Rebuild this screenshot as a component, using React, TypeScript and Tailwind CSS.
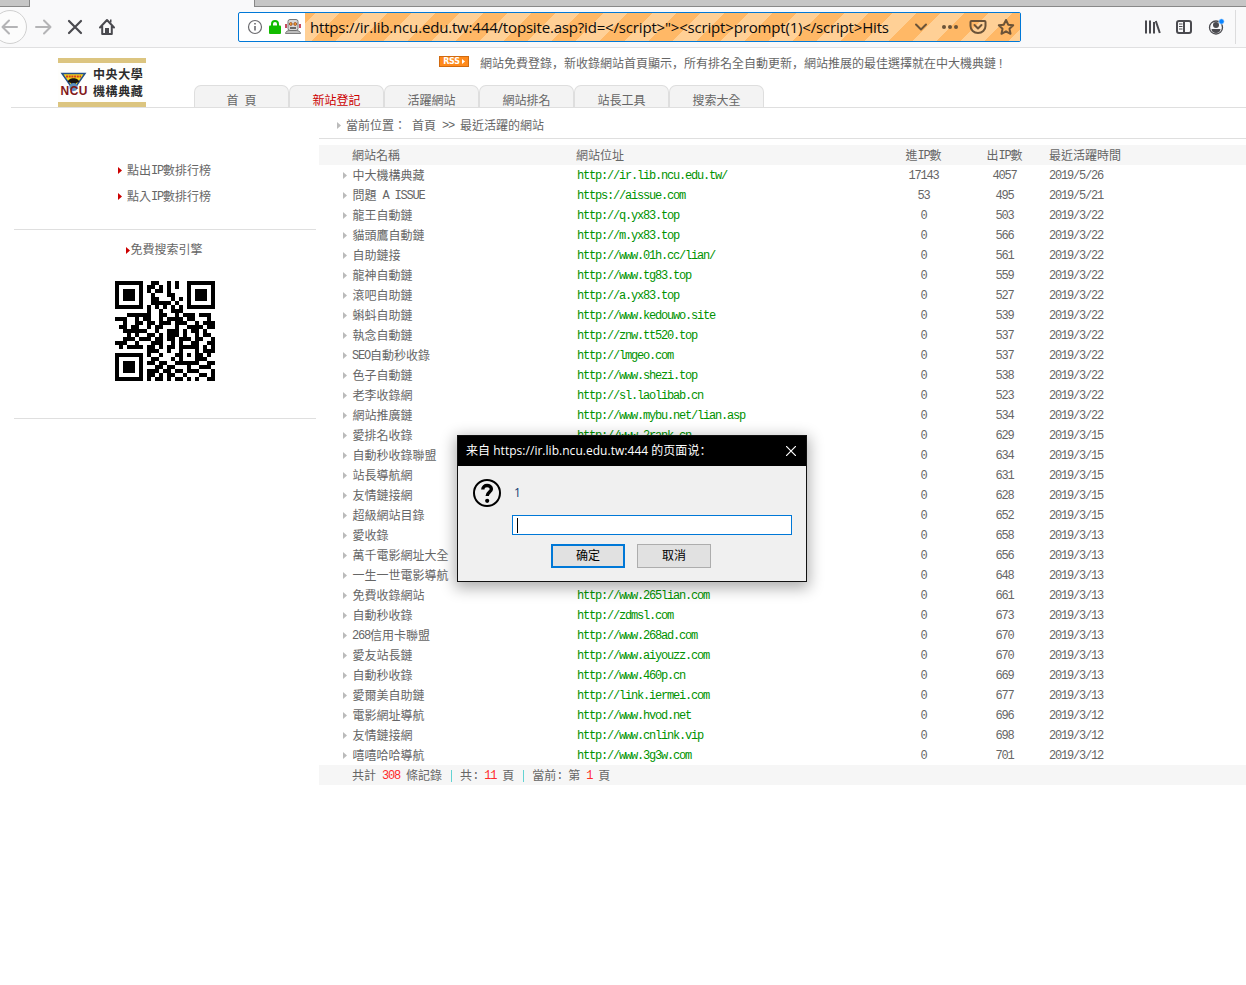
import React from "react";

const rows: [string, string, string, string, string][] = [
  ["中大機構典藏", "http://ir.lib.ncu.edu.tw/", "17143", "4057", "2019/5/26"],
  ["問題 A ISSUE", "https://aissue.com", "53", "495", "2019/5/21"],
  ["龍王自動鏈", "http://q.yx83.top", "0", "503", "2019/3/22"],
  ["貓頭鷹自動鏈", "http://m.yx83.top", "0", "566", "2019/3/22"],
  ["自助鏈接", "http://www.01h.cc/lian/", "0", "561", "2019/3/22"],
  ["龍神自動鏈", "http://www.tg83.top", "0", "559", "2019/3/22"],
  ["滾吧自助鏈", "http://a.yx83.top", "0", "527", "2019/3/22"],
  ["蝌蚪自助鏈", "http://www.kedouwo.site", "0", "539", "2019/3/22"],
  ["執念自動鏈", "http://znw.tt520.top", "0", "537", "2019/3/22"],
  ["SEO自動秒收錄", "http://lmgeo.com", "0", "537", "2019/3/22"],
  ["色子自動鏈", "http://www.shezi.top", "0", "538", "2019/3/22"],
  ["老李收錄網", "http://sl.laolibab.cn", "0", "523", "2019/3/22"],
  ["網站推廣鏈", "http://www.mybu.net/lian.asp", "0", "534", "2019/3/22"],
  ["愛排名收錄", "http://www.2rank.cn", "0", "629", "2019/3/15"],
  ["自動秒收錄聯盟", "", "0", "634", "2019/3/15"],
  ["站長導航網", "", "0", "631", "2019/3/15"],
  ["友情鏈接網", "", "0", "628", "2019/3/15"],
  ["超級網站目錄", "", "0", "652", "2019/3/15"],
  ["愛收錄", "", "0", "658", "2019/3/13"],
  ["萬千電影網址大全", "", "0", "656", "2019/3/13"],
  ["一生一世電影導航", "", "0", "648", "2019/3/13"],
  ["免費收錄網站", "http://www.265lian.com", "0", "661", "2019/3/13"],
  ["自動秒收錄", "http://zdmsl.com", "0", "673", "2019/3/13"],
  ["268信用卡聯盟", "http://www.268ad.com", "0", "670", "2019/3/13"],
  ["愛友站長鏈", "http://www.aiyouzz.com", "0", "670", "2019/3/13"],
  ["自動秒收錄", "http://www.460p.cn", "0", "669", "2019/3/13"],
  ["愛爾美自助鏈", "http://link.iermei.com", "0", "677", "2019/3/13"],
  ["電影網址導航", "http://www.hvod.net", "0", "696", "2019/3/12"],
  ["友情鏈接網", "http://www.cnlink.vip", "0", "698", "2019/3/12"],
  ["嘻嘻哈哈導航", "http://www.3g3w.com", "0", "701", "2019/3/12"],
];

const qr = [
  "1111111001100101001111111",
  "1000001011010101001000001",
  "1011101010110100001011101",
  "1011101001000110001011101",
  "1011101001100010101011101",
  "1000001001111101001000001",
  "1111111010101010101111111",
  "0000000010010011100000000",
  "0001111110011001011101110",
  "1110010110010111101100010",
  "0010011011011101110010111",
  "0110110010110001001111011",
  "0011111100100111010110100",
  "0001010011010111010010110",
  "0011101110110110111011001",
  "1110010001110010100110011",
  "0101111011010110111110101",
  "0000000011100100100010111",
  "1111111010010001101011010",
  "1000001001100010100011100",
  "1011101011011001111110011",
  "1011101000110110001001110",
  "1011101011101101101110001",
  "1000001011010110010001101",
  "1111111010110101101010011",
];

/* Latin runs take six pixels per glyph, half a CJK character. */
function T({ children, className = "" }: { children: string; className?: string }) {
  return (
    <span className={className}>
      {children.split(/([\x20-\x7e]+)/).map((s, i) =>
        i % 2 ? (
          <span key={i} className="align-[1px] font-['Liberation_Mono',monospace] text-[12px] leading-none tracking-[-1.2px]">{s}</span>
        ) : (
          s
        )
      )}
    </span>
  );
}

function Comma() {
  return <span className="font-['Noto_Sans_CJK_SC',sans-serif] leading-none" lang="zh-CN">，</span>;
}

function Bar() {
  return <span className="mt-[4px] mr-[2px] ml-[3px] h-[12px] w-px bg-[#63d3d3]" />;
}

function Arrow({ className }: { className: string }) {
  return (
    <svg className={"shrink-0 " + className} width="4" height="7" viewBox="0 0 4 7" fill="currentColor">
      <path d="M0 0L4 3.5L0 7Z" />
    </svg>
  );
}

function Toolbar() {
  return (
    <div className="flex h-[41px] shrink-0 items-center border-b border-[#e0e0e1] bg-[#f9f9fa] font-['Open_Sans',sans-serif]">
      <svg width="238" height="40" viewBox="0 0 238 40" fill="none" stroke="#4a4a4f" className="shrink-0">
        <circle cx="10" cy="20" r="16.5" fill="#fcfcfc" stroke="#d0d0d0" />
        <path d="M17 20H3M9 13.5L2.5 20L9 26.5" stroke="#b4b4b6" strokeWidth="2" strokeLinecap="round" strokeLinejoin="round" />
        <path d="M36 20H50M44 13.5L50.5 20L44 26.5" stroke="#b4b4b6" strokeWidth="2" strokeLinecap="round" strokeLinejoin="round" />
        <path d="M69 14L81 26M81 14L69 26" strokeWidth="2.2" strokeLinecap="round" />
        <path d="M100 20.5L107 13L114 20.5M102.2 19V27H111.800V19" strokeWidth="2" strokeLinecap="round" strokeLinejoin="round" />
        <path d="M105 21h4v5h-4zM110 12.500h1.500v3h-1.500z" fill="#4a4a4f" stroke="none" />
      </svg>
      <div className="flex h-[30px] w-[783px] shrink-0 items-center rounded-[2px] border border-[#0078d7] bg-white">
        <svg width="66" height="28" viewBox="0 0 66 28" fill="none" className="shrink-0">
          <circle cx="16" cy="14" r="6.500" stroke="#6a6a6e" strokeWidth="1.200" />
          <path d="M16 13V17.500M16 10V11.600" stroke="#6a6a6e" strokeWidth="1.600" />
          <path d="M33 13V11a3 3 0 0 1 6 0v2" stroke="#12bc00" strokeWidth="2" />
          <rect x="30" y="12.500" width="12" height="8.500" rx="1" fill="#12bc00" />
          <rect x="49" y="6.500" width="10" height="11" rx="2" fill="#d8d8d8" stroke="#777" />
          <path d="M47 11v4M61 11v4" stroke="#b5122c" strokeWidth="1.500" />
          <circle cx="51.800" cy="11" r="1.400" fill="#ffae35" stroke="#8b3d1d" strokeWidth=".8" />
          <circle cx="56.200" cy="11" r="1.400" fill="#ffae35" stroke="#8b3d1d" strokeWidth=".8" />
          <path d="M51 15h6" stroke="#444" strokeWidth="1.500" />
          <path d="M46.500 20.500c0-2 2-3 4-3h7c2 0 4 1 4 3z" fill="#bdbdbd" stroke="#666" strokeWidth=".8" />
        </svg>
        <div className="flex h-full min-w-0 flex-1 items-center bg-[#ffb866] bg-[repeating-linear-gradient(-45deg,#ffd096_0px,#ffd096_8px,#ffb866_8px,#ffb866_25px,#ffd096_25px,#ffd096_34px)]">
          <span className="w-[600px] shrink-0 whitespace-pre pb-px pl-[5px] text-[15px] tracking-[-0.175px] text-[#0c0c0d]">{'https://ir.lib.ncu.edu.tw:444/topsite.asp?id=</script>"><script>prompt(1)</script>Hits'}</span>
          <svg width="115" height="28" viewBox="0 0 115 28" fill="none" stroke="#6b5338" strokeWidth="2" className="shrink-0">
            <path d="M11 11.500L16 16.500L21 11.500" strokeLinecap="round" strokeLinejoin="round" />
            <g fill="#6b5338" stroke="none"><circle cx="39" cy="14" r="2" /><circle cx="45" cy="14" r="2" /><circle cx="51" cy="14" r="2" /></g>
            <path d="M66.500 8h13a1 1 0 0 1 1 1v4a7.500 7 0 0 1-15 0V9a1 1 0 0 1 1-1zM69.500 12L73 15.500L76.500 12" strokeLinecap="round" strokeLinejoin="round" />
            <path d="M101 7L103.200 11.700L108.200 12.300L104.500 15.800L105.500 20.800L101 18.300L96.500 20.800L97.500 15.800L93.800 12.300L98.800 11.700Z" strokeLinejoin="round" />
          </svg>
        </div>
      </div>
      <svg width="225" height="40" viewBox="0 0 225 40" fill="none" stroke="#4a4a4f" strokeWidth="2" className="shrink-0">
        <path d="M125 13.500V26.500M129 13.500V26.500M133 15V26.500M134.800 14L138.800 26" />
        <rect x="156" y="14" width="14" height="12" rx="2" />
        <path d="M163 14V26" />
        <path d="M158 17h3.500M158 19.500h3.500M158 22h3.500" strokeWidth="1" />
        <circle cx="195" cy="20.500" r="6.500" strokeWidth="1.300" />
        <circle cx="195" cy="18" r="3" fill="#4a4a4f" stroke="none" />
        <path d="M190.500 22h9c0 2.500-2 4-4.500 4s-4.500-1.500-4.500-4z" fill="#4a4a4f" stroke="none" />
        <circle cx="200.500" cy="14.500" r="2.700" fill="#0a84ff" stroke="#f9f9fa" strokeWidth=".6" />
        <path d="M214.500 3V37" stroke="#dcdcdd" strokeWidth="1" />
      </svg>
    </div>
  );
}

function Logo() {
  return (
    <div className="flex h-[49px] w-[88px] shrink-0 flex-col justify-center border-y-[5px] border-[#dcc580] bg-[#fefefc]">
      <div className="flex items-center">
        <svg width="31" height="34" viewBox="0 0 31 34" className="shrink-0">
          <path d="M4 7.500H27L15.500 24Z" fill="#f4d51c" stroke="#24508c" strokeWidth="1.500" />
          <path d="M8 10.500h15" stroke="#d13b24" strokeWidth="2" strokeDasharray="2 .7" />
          <path d="M10 16c0-5 11-5 11 0l-3 1v3h-5v-3z" fill="#171310" />
          <circle cx="15.500" cy="21" r="4" fill="#5b91c0" />
          <text x="2.500" y="28.500" fill="#831818" fontSize="12" fontWeight="bold" fontFamily="Liberation Sans, sans-serif" textLength="27">NCU</text>
        </svg>
        <div className="mt-[-2px] flex flex-col pl-[4px] font-['Noto_Sans_CJK_TC',sans-serif] text-[12px] leading-[17px] font-bold tracking-[0.6px] whitespace-nowrap text-[#2c2c2c]">
          <span>中央大學</span>
          <span>機構典藏</span>
        </div>
      </div>
    </div>
  );
}

const cols = "grid grid-cols-[33px_225px_306px_81px_81px_1fr]";

export default function App() {
  return (
    <div className="relative flex h-[985px] w-[1246px] flex-col overflow-hidden bg-white font-['Liberation_Sans','Noto_Sans_CJK_TC',sans-serif] text-[12px] leading-[20px] text-[#666]">
      <div className="flex h-[7px] shrink-0 bg-[#f9f9fa]">
        <div className="w-[30px] border-r border-b border-[#888] bg-[#c6c6c6]" />
        <div className="w-[224px]" />
        <div className="flex-1 border-b border-l border-[#888] bg-[#c6c6c6]" />
      </div>
      <Toolbar />

      <header className="ml-[11px] flex h-[60px] shrink-0 items-end border-b border-[#dfdfdf] pl-[47px]">
        <Logo />
        <div className="ml-[48px] flex h-full flex-col justify-between">
          <div className="flex h-[30px] items-center pl-[245px]">
            <div className="mt-[-3px] flex h-[11px] w-[30px] items-center justify-center gap-[2px] border border-[#d06a10] bg-[#ff8a1c] font-['DejaVu_Sans',sans-serif] text-[8px] leading-none font-bold tracking-[-0.2px] text-white">
              RSS<svg width="3" height="5" viewBox="0 0 3 5"><path d="M0 0L3 2.500L0 5Z" fill="#fff" /></svg>
            </div>
            <span className="pt-px pl-[11px] whitespace-nowrap">
              網站免費登錄<Comma />新收錄網站首頁顯示<Comma />所有排名全自動更新<Comma />網站推展的最佳選擇就在中大機典鏈<span className="pl-[3px]">!</span>
            </span>
          </div>
          <nav className="flex h-[22px]">
            {["首 頁", "新站登記", "活躍網站", "網站排名", "站長工具", "搜索大全"].map((t, i) => (
              <div key={t} className={"flex w-[95px] justify-center overflow-hidden rounded-t-[7px] border border-b-0 border-[#dedede] bg-[#f3f3f3] pt-[5px] whitespace-pre " + (i === 1 ? "text-[#c00]" : "")}>
                <T>{t}</T>
              </div>
            ))}
          </nav>
        </div>
      </header>

      <div className="flex min-h-0 flex-1">
        <aside className="flex w-[319px] shrink-0 flex-col pr-[3px] pl-[14px]">
          <div className="flex h-[122px] flex-col gap-[6px] border-b border-[#dfdfdf] pt-[52px] pl-[104px]">
            {["點出IP數排行榜", "點入IP數排行榜"].map((t) => (
              <div key={t} className="flex h-[20px] items-center gap-[5px]">
                <Arrow className="text-[#c00]" />
                <T className="pt-px">{t}</T>
              </div>
            ))}
          </div>
          <div className="flex h-[189px] flex-col items-center border-b border-[#dfdfdf] pt-[10px]">
            <div className="mr-px flex items-center"><Arrow className="text-[#c00]" /><span>免費搜索引擎</span></div>
            <svg className="mt-[21px]" width="100" height="100" viewBox="0 0 25 25" shapeRendering="crispEdges">
              <path d={qr.map((r, y) => r.split("").map((c, x) => (c === "1" ? `M${x} ${y}h1v1h-1z` : "")).join("")).join("")} fill="#000" />
            </svg>
          </div>
        </aside>

        <main className="min-w-0 flex-1">
          <div className="flex h-[31px] items-center border-b border-[#dfdfdf] pt-[5px] pb-[1px] pl-[18px]">
            <Arrow className="text-[#bbb]" />
            <span className="pt-[2px] pl-[5px] whitespace-pre"><T>{"當前位置： 首頁 >> 最近活躍的網站"}</T></span>
          </div>
          <div className={cols + " mt-[6px] h-[20px] bg-[#f6f6f6] pt-px"}>
            <span />
            <span>網站名稱</span>
            <span className="-ml-px">網站位址</span>
            <T className="text-center">進IP數</T>
            <T className="text-center">出IP數</T>
            <span className="pl-[4px]">最近活躍時間</span>
          </div>
          {rows.map((r, i) => (
            <div key={i} className={cols + " h-[20px] pt-px whitespace-nowrap"}>
              <span className="flex h-[19px] items-center pl-[24px]"><Arrow className="text-[#bbb]" /></span>
              <T className={/^[A-Z0-9]/.test(r[0]) ? "" : "pl-[0.5px]"}>{r[0]}</T>
              <T className="text-[#009200]">{r[1]}</T>
              <T className="text-center">{r[2]}</T>
              <T className="text-center">{r[3]}</T>
              <T className="pl-[4px]">{r[4]}</T>
            </div>
          ))}
          <div className="flex h-[20px] bg-[#f6f6f6] pt-px pl-[33px] whitespace-pre">
            <T>{"共計 "}</T><T className="text-[#ff2b2b]">308</T><T>{" 條記錄 "}</T><Bar />
            <T>{" 共: "}</T><T className="text-[#ff2b2b]">11</T><T>{" 頁 "}</T><Bar />
            <T>{" 當前: 第 "}</T><T className="text-[#ff2b2b]">1</T><T>{" 頁"}</T>
          </div>
        </main>
      </div>

      <div className="absolute top-[435px] left-[457px] flex h-[147px] w-[350px] flex-col border border-[#111] bg-[#f0f0f0] font-['Open_Sans','Noto_Sans_CJK_SC',sans-serif] text-black shadow-[0_4px_14px_2px_rgba(0,0,0,0.32)]">
        <div className="flex h-[30px] shrink-0 items-center justify-between bg-black pr-[10px] pl-[8px] text-[12px] text-white">
          <span className="tracking-[0.03px]">来自 https://ir.lib.ncu.edu.tw:444 的页面说：</span>
          <svg width="10" height="10" viewBox="0 0 10 10" stroke="#fff" strokeWidth="1.200"><path d="M0 0L10 10M10 0L0 10" /></svg>
        </div>
        <div className="flex pt-[12px] pl-[14px]">
          <svg width="30" height="30" viewBox="0 0 30 30" fill="none" stroke="#000" className="shrink-0">
            <circle cx="15" cy="15" r="13" strokeWidth="2" />
            <path d="M10.800 11.500c0-5.500 8.600-5 8.600-.5c0 3-4.200 3.200-4.200 7" strokeWidth="3.400" />
            <circle cx="15.200" cy="22.800" r="2.100" fill="#000" stroke="none" />
          </svg>
          <div className="flex flex-col pl-[10px]">
            <span className="h-[37px] pt-[5px] pl-[2px] text-[12px] text-[#123a70]">1</span>
            <div className="flex h-[20px] w-[280px] items-center border border-[#0078d7] bg-white pl-[4px]"><div className="h-[15px] w-px bg-black" /></div>
            <div className="mt-[9px] ml-[39px] flex gap-[12px] text-[12px]">
              <div className="flex h-[24px] w-[74px] items-center justify-center border-2 border-[#0078d7] bg-[#e1e1e1]">确定</div>
              <div className="flex h-[24px] w-[74px] items-center justify-center border border-[#adadad] bg-[#e1e1e1]">取消</div>
            </div>
          </div>
        </div>
      </div>
    </div>
  );
}
